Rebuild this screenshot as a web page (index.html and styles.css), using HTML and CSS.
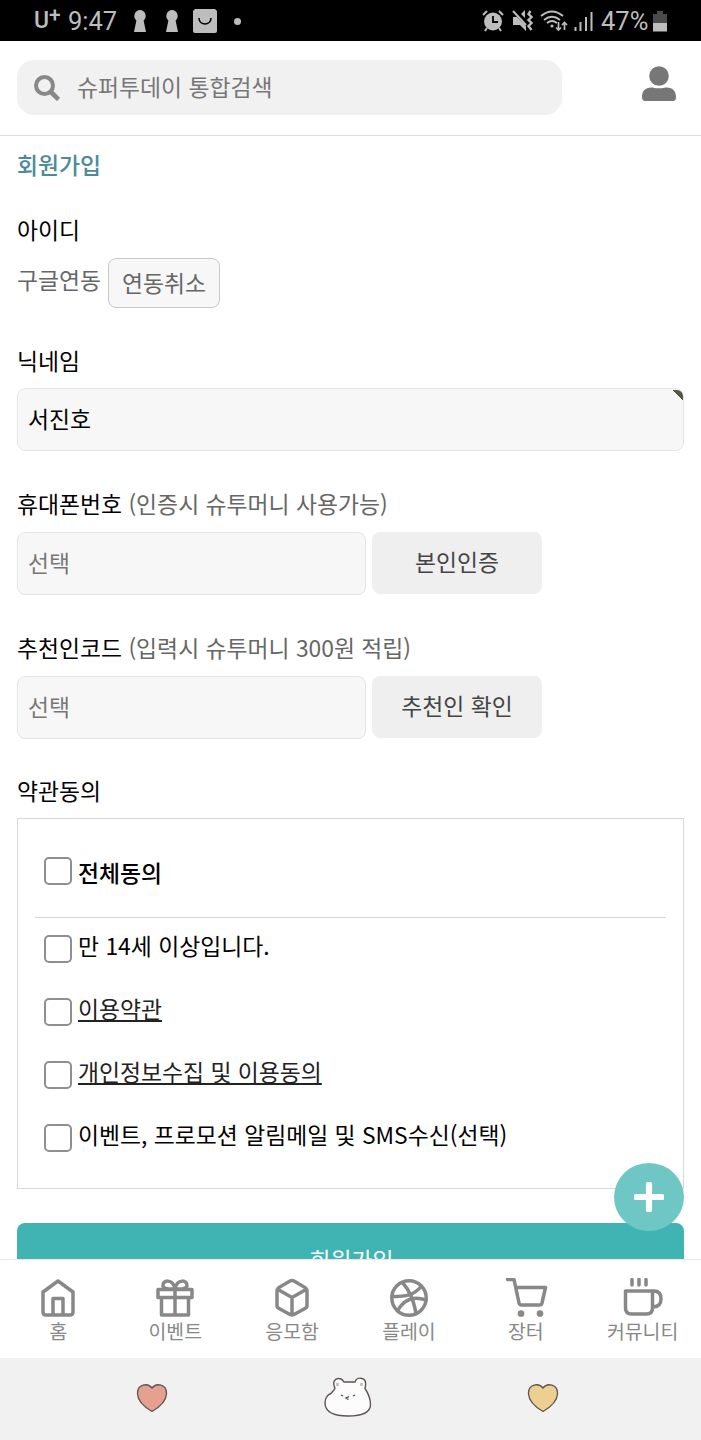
FILE: index.html
```html
<!DOCTYPE html>
<html lang="ko">
<head>
  <meta charset="UTF-8" />
  <meta name="viewport" content="width=device-width, initial-scale=1.0" />
  <title>슈퍼투데이 - 회원가입</title>
  <link rel="stylesheet" href="styles.css">
</head>
<body>

  <div class="status-bar">
    <div class="status-left">
      <span class="carrier">U<sup>+</sup></span>
      <span class="clock">9:47</span>
      <svg class="keyhole" width="14" height="24" viewBox="0 0 14 24"><path d="M7 1a6 6 0 0 1 3.600 10.500L13 23H1l2.400-11.500A6 6 0 0 1 7 1z" fill="#bdbdbd"/></svg>
      <svg class="keyhole second" width="14" height="24" viewBox="0 0 14 24"><path d="M7 1a6 6 0 0 1 3.600 10.500L13 23H1l2.400-11.500A6 6 0 0 1 7 1z" fill="#bdbdbd"/></svg>
      <svg class="bag" width="24" height="24" viewBox="0 0 24 24"><path d="M2 0h20l2 2v20q0 2-2 2H2q-2 0-2-2V2z" fill="#bdbdbd"/><path d="M6 9c0 8 12 8 12 0" fill="none" stroke="#000" stroke-width="1.600"/></svg>
      <span class="dot"></span>
    </div>
    <div class="status-right">
      <svg width="22" height="22" viewBox="0 0 22 22"><circle cx="11" cy="11.500" r="9" fill="#bdbdbd"/><path d="M1 5l4-4M21 5l-4-4M5 18l-2 3M17 18l2 3" stroke="#bdbdbd" stroke-width="2"/><path d="M11 6v6h5" fill="none" stroke="#000" stroke-width="1.800"/></svg>
      <svg class="mute" width="22" height="22" viewBox="0 0 22 22"><path d="M1 7h4l9 9v5l-6-6H1zM9 4l4-4v8z" fill="#bdbdbd"/><path d="M1 1l13 14" stroke="#bdbdbd" stroke-width="2"/><path d="M18.500 1l-2 3 3 3-3 3 3 3-3 3 3 4" fill="none" stroke="#bdbdbd" stroke-width="2.400"/></svg>
      <svg class="wifi" width="28" height="22" viewBox="0 0 28 22"><path d="M1 6Q12-3 23 6M4 10q8-6.500 16 0M7 13q5-4 10 0" fill="none" stroke="#bdbdbd" stroke-width="1.900"/><circle cx="12" cy="16" r="1.600" fill="#bdbdbd"/><path d="M18.500 12v8M16 17.500l2.500 2.500 2.500-2.500M24.500 20v-7M22 15l2.500-2.500L27 15" fill="none" stroke="#bdbdbd" stroke-width="1.700"/></svg>
      <svg class="signal" width="19" height="20" viewBox="0 0 19 20"><path d="M1.500 20v-4M6.500 20v-9M12 20V6M17.500 20V1" stroke="#bdbdbd" stroke-width="2"/></svg>
      <span class="percent">47%</span>
      <svg class="battery" width="14" height="21" viewBox="0 0 14 21"><path d="M4 0h6v3h4v9H0V3h4z" fill="#4a4a4a"/><path d="M0 12h14v8.500H0z" fill="#bdbdbd"/></svg>
    </div>
  </div>

  <header class="header">
    <div class="search-box">
      <svg width="26" height="26" viewBox="0 0 26 26" fill="none" stroke="#888"><circle cx="10.500" cy="10.500" r="8.500" stroke-width="4"/><path d="M17 17l7.500 7.500" stroke-width="4.600"/></svg>
      <input type="text" placeholder="슈퍼투데이 통합검색">
    </div>
    <svg class="user-icon" width="34" height="35" viewBox="0 0 34 35" fill="#777"><circle cx="17" cy="10" r="9.800"/><path d="M0 31c0-6 3.500-9.500 9-9.500 2.500 0 4 .8 8 .8s5.500-.8 8-.8c5.500 0 9 3.500 9 9.500 0 2.500-1 4-3 4H3c-2 0-3-1.500-3-4z"/></svg>
  </header>

  <main class="content">
    <h1>회원가입</h1>

    <div class="field">
      <label>아이디</label>
      <div class="id-row">
        <span>구글연동</span>
        <button class="cancel-btn">연동취소</button>
      </div>
    </div>

    <div class="field nickname">
      <label>닉네임</label>
      <div class="required">
        <input type="text" value="서진호">
      </div>
    </div>

    <div class="field">
      <label>휴대폰번호 <span>(인증시 슈투머니 사용가능)</span></label>
      <div class="input-row">
        <input type="text" placeholder="선택">
        <button>본인인증</button>
      </div>
    </div>

    <div class="field code">
      <label>추천인코드 <span>(입력시 슈투머니 300원 적립)</span></label>
      <div class="input-row">
        <input type="text" placeholder="선택">
        <button>추천인 확인</button>
      </div>
    </div>

    <div class="field agree">
      <label>약관동의</label>
      <div class="terms">
        <div class="term all"><input type="checkbox"><b>전체동의</b></div>
        <div class="term"><input type="checkbox"><span>만 14세 이상입니다.</span></div>
        <div class="term"><input type="checkbox"><a href="#">이용약관</a></div>
        <div class="term"><input type="checkbox"><a href="#">개인정보수집 및 이용동의</a></div>
        <div class="term"><input type="checkbox"><span>이벤트, 프로모션 알림메일 및 SMS수신(선택)</span></div>
      </div>
    </div>

    <button class="submit-btn">회원가입</button>
  </main>

  <button class="fab">
    <svg width="30" height="30" viewBox="0 0 30 30"><path d="M15 2.500v25M2.500 15h25" stroke="#fff" stroke-width="6.200" stroke-linecap="round"/></svg>
  </button>

  <nav class="tab-bar">
    <a href="#">
      <svg viewBox="0 0 40 40"><path d="M20 3L35 14v20q0 3-3 3H8q-3 0-3-3V14zM15 37V20.500h10V37"/></svg>
      <span>홈</span>
    </a>
    <a href="#">
      <svg viewBox="0 0 40 40"><path d="M3 11.500h34v8H3zM6.500 19.500h27V37h-27zM20 11.500V37M20 11C16 11 9 12 8 8c-1-6 10-8 12 3 2-11 13-9 12-3-1 4-8 3-12 3z"/></svg>
      <span>이벤트</span>
    </a>
    <a href="#">
      <svg viewBox="0 0 40 40"><path d="M20 2.500q1 0 2 .6l11 6.400q2 1.200 2 3v15q0 2-2 3l-11 6q-2 1-4 0l-11-6q-2-1-2-3v-15q0-1.800 2-3l11-6.400q1-.6 2-.6zM6 11.500L20 19.500l14-8M20 19.500V37"/></svg>
      <span>응모함</span>
    </a>
    <a href="#">
      <svg viewBox="0 0 40 40"><circle cx="20" cy="20" r="17.200"/><path d="M13.500 4.500c8 9 11 18 13.500 31M3 18.500c14 0 22-1 29.500-10.500M8.500 33C15 21 25 18 37 22"/></svg>
      <span>플레이</span>
    </a>
    <a href="#">
      <svg class="cart" viewBox="0 0 44 40"><path d="M3.500 1.500H10l5 23.500q.4 2 2.500 2h18q2 0 2.500-2l3.500-15.500H12"/><circle cx="17" cy="35.500" r="1.600"/><circle cx="36" cy="35.500" r="1.600"/></svg>
      <span>장터</span>
    </a>
    <a href="#">
      <svg class="cup" viewBox="0 0 44 40"><path d="M4.500 13h27v17q0 6-6 6h-15q-6 0-6-6zM31.500 13H33q7 0 7 8t-8.500 8M11 1.500v5.500M18 1.500v5.500M25 1.500v5.500"/></svg>
      <span>커뮤니티</span>
    </a>
  </nav>

  <div class="system-nav">
    <svg width="32" height="30" viewBox="0 0 32 30"><path d="M16 28.500C10 25 2 19 1.500 11 1 1 12-.5 16 5 20-.5 31 1 30.500 11 30 19 22 25 16 28.500z" fill="#e6a090" stroke="#5d5552" stroke-width="1.300"/></svg>
    <svg width="48" height="42" viewBox="0 0 48 42"><path d="M11 11C8 5 11 1 15 1.500c3 0 4 2 5 3.500h11c1-3 4-4.500 7-3.500 4 1 4 6 3 10 4 6 5.500 11 5.500 16C46.500 36 37 39 24 39 10 39 1 35 1 26c0-5 3-8.500 6-9.500 1.500-2 3-3 4-5.500z" fill="#fcfcfc" stroke="#5d5552" stroke-width="1.400"/><path d="M13.500 9V6M37.500 9V6" stroke="#bbb" stroke-width="2.500"/><path d="M17 18l2 1M29 19l2-1M25 19.500l-3 1.500 2.500 1.500" fill="none" stroke="#444" stroke-width="1.300"/></svg>
    <svg width="32" height="30" viewBox="0 0 32 30"><path d="M16 28.500C10 25 2 19 1.500 11 1 1 12-.5 16 5 20-.5 31 1 30.500 11 30 19 22 25 16 28.500z" fill="#edd091" stroke="#5d5552" stroke-width="1.300"/></svg>
  </div>

</body>
</html>
```
FILE: styles.css
```css
:root {
  --text-gray: #666;
  --input-bg: #f7f7f7;
  --teal: #40b4b2;
}

* {
  box-sizing: border-box;
}

body {
  margin: 0;
  height: 1440px;
  display: flex;
  flex-direction: column;
  overflow: hidden;
  position: relative;
  background: #fff;
  color: #000;
  font-family: 'Noto Sans CJK KR', sans-serif;
  font-size: 22.84px;
  line-height: 32px;
}

input, button {
  font: inherit;
  margin: 0;
}

svg {
  display: block;
  flex: none;
}

/* phone status bar */
.status-bar {
  flex: none;
  height: 41px;
  padding: 1px 34px 0;
  background: #000;
  color: #bdbdbd;
  display: flex;
  justify-content: space-between;
  font-family: Roboto, sans-serif;
}

.status-left, .status-right {
  display: flex;
  align-items: center;
}

.carrier {
  width: 34px;
  font-weight: 500;
  font-size: 23px;
  line-height: 34px;
  white-space: nowrap;
}

.carrier sup {
  font-size: 21px;
  line-height: 0;
  vertical-align: 6px;
}

.clock {
  width: 65px;
  font-size: 25.5px;
}

.keyhole.second {
  margin-left: 18px;
}

.bag {
  margin-left: 14px;
}

.dot {
  width: 7px;
  height: 7px;
  margin-left: 17px;
  border-radius: 50%;
  background: #bdbdbd;
}

.mute {
  margin-left: 8px;
}

.wifi {
  margin-left: 6px;
}

.signal {
  margin-left: 6px;
}

.percent {
  width: 52px;
  margin-left: 8px;
  font-size: 25.5px;
}

/* header */
.header {
  flex: none;
  height: 95px;
  padding: 19px 25px 0 17px;
  border-bottom: 1px solid #ddd;
  display: flex;
  justify-content: space-between;
}

.search-box {
  width: 545px;
  height: 55px;
  padding: 0 17px;
  border-radius: 17px;
  background: #f1f1f1;
  display: flex;
  align-items: center;
  gap: 17px;
}

.search-box input {
  flex: 1;
  padding: 0 0 2px;
  border: none;
  outline: none;
  background: none;
}

.user-icon {
  margin-top: 6px;
}

::placeholder {
  color: #777;
  opacity: 1;
}

/* sign up form */
.content {
  flex: 1;
  min-height: 0;
  overflow: hidden;
  padding: 13px 17px 0;
}

h1 {
  margin: 0 0 33px;
  font-size: inherit;
  font-weight: 500;
  color: #4b8b96;
}

.field {
  margin-bottom: 37px;
}

.field label {
  display: block;
  margin-bottom: 12px;
}

.nickname label, .agree label {
  margin-bottom: 11px;
}

.field.code {
  margin-bottom: 36px;
}

.field label span {
  color: var(--text-gray);
}

.id-row {
  display: flex;
  gap: 7px;
  color: var(--text-gray);
}

.id-row span {
  width: 84px;
  margin-top: 6px;
  white-space: nowrap;
}

.cancel-btn {
  width: 112px;
  height: 50px;
  padding: 0;
  border: 1px solid #c8c8c8;
  border-radius: 8px;
  background: var(--input-bg);
  color: var(--text-gray);
}

.required {
  position: relative;
  height: 63px;
  border-radius: 8px;
  overflow: hidden;
}

.required::after {
  content: '';
  position: absolute;
  top: 2px;
  right: 1px;
  width: 11px;
  height: 11px;
  border-top-right-radius: 6px;
  background: linear-gradient(to top right, transparent 50%, #555742 51%);
}

.field input[type="text"] {
  width: 100%;
  height: 63px;
  padding: 0 10px 2px;
  border: 1px solid #e3e6e6;
  border-radius: 8px;
  background: var(--input-bg);
  outline: none;
  display: block;
}

.input-row {
  display: grid;
  grid-template-columns: 349px 170px;
  gap: 6px;
}

.input-row button {
  height: 62px;
  padding: 0 0 2px;
  border: none;
  border-radius: 8px;
  background: #efefef;
  color: #444;
}

.terms {
  height: 371px;
  padding: 0 17px;
  border: 1px solid #d8d8d8;
}

.term {
  height: 63px;
  padding: 13px 0 0 9px;
  display: flex;
  align-items: flex-start;
}

.term.all {
  height: 99px;
  padding-top: 38px;
  margin-bottom: 4px;
  border-bottom: 1px solid #d8d8d8;
}

.term input {
  appearance: none;
  width: 28px;
  height: 28px;
  margin-right: 6px;
  border: 2px solid #8f8f8f;
  border-radius: 5px;
  background: #fff;
}

.term b {
  font-weight: 500;
}

.term a {
  color: #222;
  text-underline-offset: 2px;
}

.term span, .term a {
  margin-top: -5px;
}

.submit-btn {
  width: 100%;
  height: 72px;
  padding: 2px 0 0 2px;
  margin-top: -3px;
  border: none;
  border-radius: 8px;
  background: var(--teal);
  color: #fff;
}

.fab {
  position: absolute;
  left: 614px;
  top: 1163px;
  width: 70px;
  height: 68px;
  padding: 0;
  border: none;
  border-radius: 50%;
  background: #6fc7c5;
  display: grid;
  place-items: center;
}

/* bottom tabs */
.tab-bar {
  flex: none;
  height: 99px;
  padding-top: 18px;
  border-top: 1px solid #e8e8e8;
  display: grid;
  grid-template-columns: repeat(6, 1fr);
}

.tab-bar a {
  display: flex;
  flex-direction: column;
  align-items: center;
  color: #888;
  font-size: 19.4px;
  line-height: 26px;
  text-decoration: none;
}

.tab-bar svg {
  width: 40px;
  height: 40px;
  fill: none;
  stroke: #888;
  stroke-width: 3.500;
  stroke-linecap: round;
  stroke-linejoin: round;
}

.tab-bar .cart, .tab-bar .cup {
  width: 44px;
}

.system-nav {
  flex: none;
  height: 82px;
  padding: 0 142px 2px 136px;
  background: #f1f1f1;
  display: flex;
  align-items: center;
  justify-content: space-between;
}
```
